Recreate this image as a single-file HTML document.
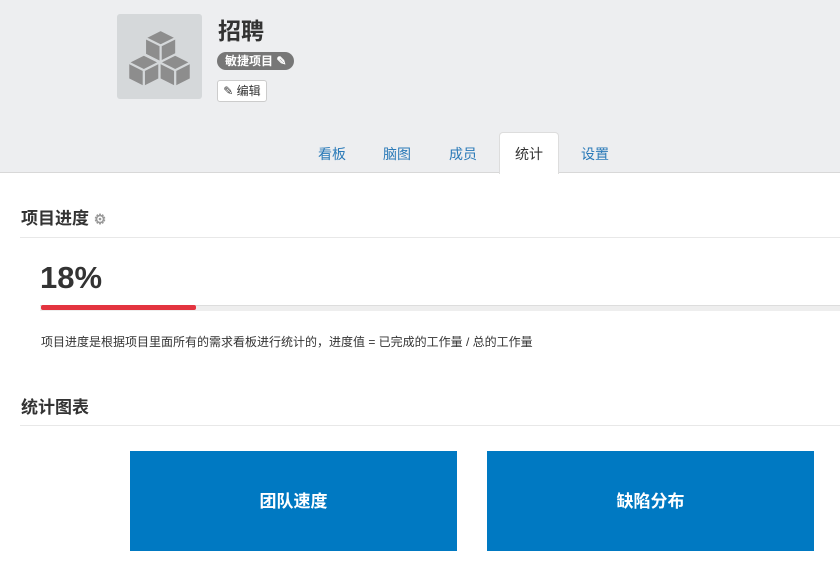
<!DOCTYPE html>
<html><head><meta charset="utf-8"><style>
*{margin:0;padding:0;box-sizing:border-box}
body{width:840px;height:570px;overflow:hidden;background:#fff;font-family:"Liberation Sans","Noto Sans CJK SC",sans-serif;color:#333;position:relative}
.hdr{position:absolute;left:0;top:0;width:840px;height:173px;background:#edeef0;border-bottom:1px solid #d8d8d8}
.logo{position:absolute;left:117px;top:14px;width:85px;height:85px;background:#d5d8da;border-radius:3px}
.title{position:absolute;left:218px;top:12px;font-size:23px;font-weight:bold;color:#333}
.badge{position:absolute;left:217px;top:52px;height:18px;padding:0 8px;background:#777;color:#fff;font-size:12px;font-weight:bold;border-radius:9px;line-height:18px}
.btn{position:absolute;left:217px;top:80px;height:22px;width:50px;background:#fff;border:1px solid #ccc;border-radius:3px;font-size:12px;line-height:20px;text-align:center}
.tab{position:absolute;top:144px;font-size:14px;color:#2a7ab8}
.active{position:absolute;left:499px;top:132px;width:60px;height:42px;background:#fff;border:1px solid #ddd;border-bottom:none;border-radius:4px 4px 0 0}
h3{position:absolute;font-size:17px;font-weight:bold;color:#333}
.line{position:absolute;left:20px;width:820px;height:1px;background:#e8e8e8}
.box{position:absolute;top:451px;width:327px;height:100px;background:#0079c2;color:#fff;font-size:17px;font-weight:bold;text-align:center;line-height:102px}
</style></head><body>
<div class="hdr">
<div class="logo"><svg width="85" height="85" viewBox="0 0 85 85"><g transform="translate(42.5 45) scale(1.12) translate(-43 -41)"><g fill="#8d8d8d" stroke="#d5d8da" stroke-width="2"><path d="M30 22 L44 15 L58 22 L58 37 L44 44 L30 37Z"/><path d="M15 44 L29 37 L43 44 L43 59 L29 66 L15 59Z"/><path d="M43 44 L57 37 L71 44 L71 59 L57 66 L43 59Z"/></g><g fill="none" stroke="#d5d8da" stroke-width="2"><path d="M30 22 L44 29 L58 22 M44 29 V44"/><path d="M15 44 L29 51 L43 44 M29 51 V66"/><path d="M43 44 L57 51 L71 44 M57 51 V66"/></g></g></svg></div>
<div class="title">招聘</div>
<div class="badge">敏捷项目 ✎</div>
<div class="btn">✎ 编辑</div>
<div class="active"></div>
<div class="tab" style="left:318px">看板</div>
<div class="tab" style="left:383px">脑图</div>
<div class="tab" style="left:449px">成员</div>
<div class="tab" style="left:515px;color:#333">统计</div>
<div class="tab" style="left:581px">设置</div>
</div>
<h3 style="left:21px;top:204px">项目进度 <span style="color:#999;font-size:14px">⚙</span></h3>
<div class="line" style="top:237px"></div>
<div style="position:absolute;left:40px;top:260px;font-size:31px;font-weight:bold;color:#333">18%</div>
<div style="position:absolute;left:40px;top:305px;width:800px;height:6px;background:#eee;border-top:1px solid #ddd"></div>
<div style="position:absolute;left:41px;top:305px;width:155px;height:5px;background:#e3343f;border-radius:2px"></div>
<div style="position:absolute;left:41px;top:333px;font-size:12px;color:#333">项目进度是根据项目里面所有的需求看板进行统计的，进度值 = 已完成的工作量 / 总的工作量</div>
<h3 style="left:21px;top:393px">统计图表</h3>
<div class="line" style="top:425px"></div>
<div class="box" style="left:130px">团队速度</div>
<div class="box" style="left:487px">缺陷分布</div>
</body></html>
